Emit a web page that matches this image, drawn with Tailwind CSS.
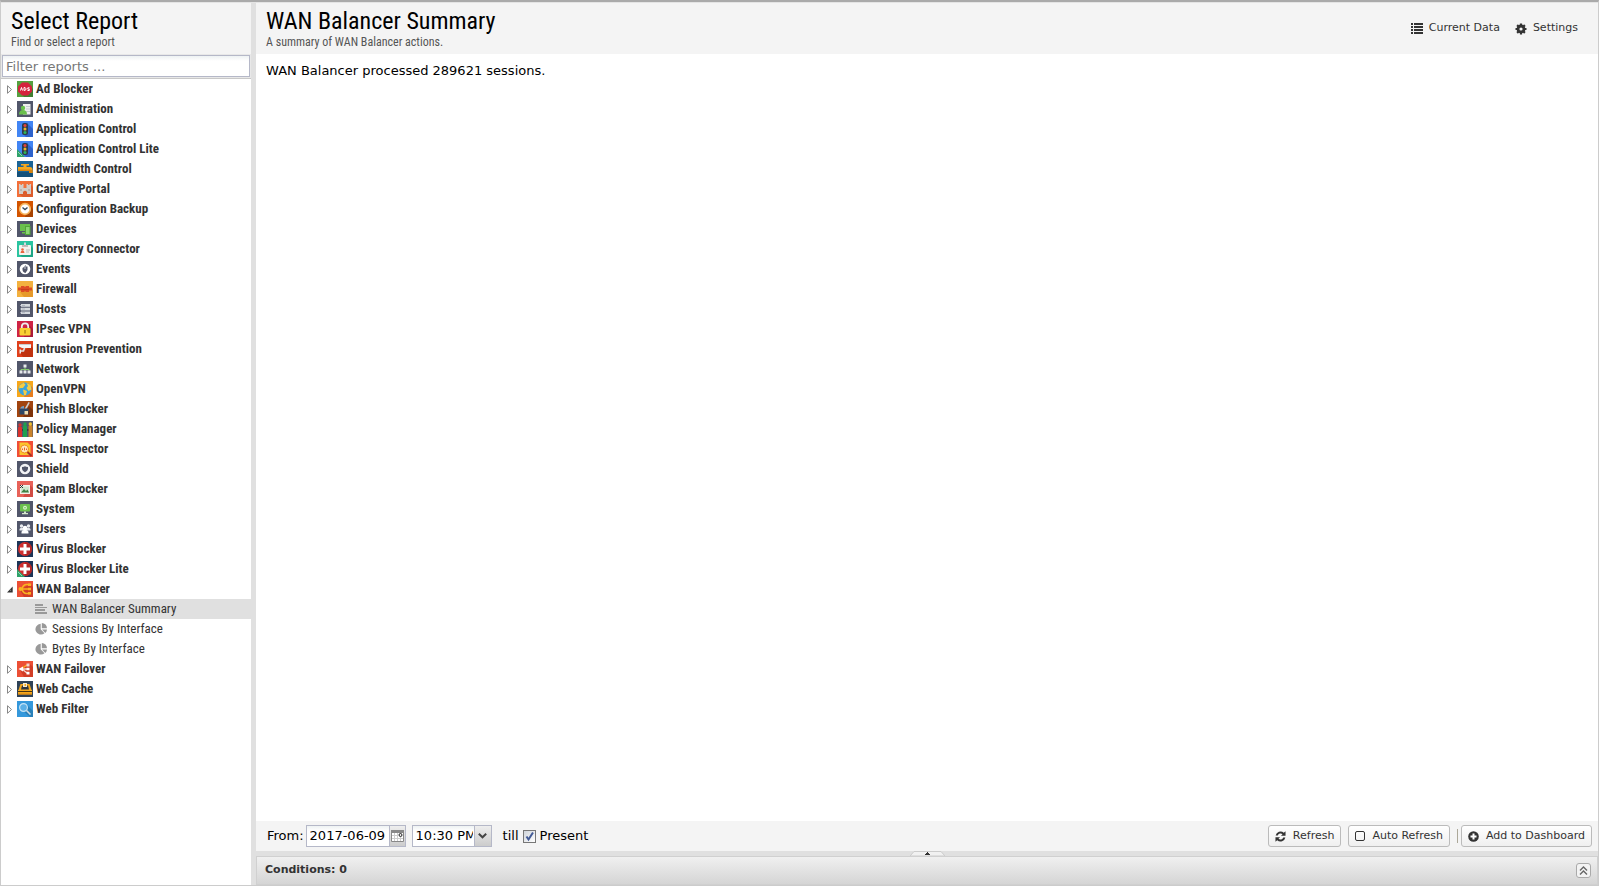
<!DOCTYPE html>
<html lang="en">
<head>
    <meta charset="UTF-8">
    <meta name="viewport" content="width=device-width, initial-scale=1.0">
    <title>Reports - WAN Balancer Summary</title>
    <script src="https://cdn.jsdelivr.net/npm/@tailwindcss/browser@4"></script>
</head>
<body class="h-screen flex flex-col overflow-hidden bg-white text-black font-['DejaVu_Sans',sans-serif] text-[13px] border border-t-2 border-[#cccccc] border-t-[#aaaaaa]">
    <div class="flex-1 min-h-0 flex border-t border-[#e4e4e4]">
        <!-- Report list -->
        <aside class="w-[250px] shrink-0 flex flex-col font-['Roboto_Condensed','Liberation_Sans_Narrow',sans-serif]">
            <header class="h-[51px] px-[10px] pt-1 bg-[#f4f4f4]">
                <h2 class="text-[24px] leading-[28px]">Select Report</h2>
                <p class="text-[12px] leading-[14px] text-[#555555]">Find or select a report</p>
            </header>
            <div class="h-[25px] p-px bg-[#e8e8e8] border-b border-[#c8c8c8]">
                <input id="filter" type="text" aria-label="Filter reports" placeholder="Filter reports ..." oninput="filterReports()" class="block w-full h-[22px] px-[3px] border border-[#b5b8c8] bg-linear-to-b from-[#eef2f3] to-white to-25% font-['DejaVu_Sans',sans-serif] text-[13px] placeholder:text-[#777777] outline-none">
            </div>
            <ul id="tree" class="flex-1 overflow-hidden text-[13px] text-[#333333]"></ul>
        </aside>

        <div class="w-[5px] shrink-0 bg-[#e0e0e0]"></div>

        <!-- Report view -->
        <main class="flex-1 min-w-0 flex flex-col">
            <header class="h-[51px] pl-[10px] pr-5 flex justify-between bg-[#f4f4f4]">
                <div class="pt-1 font-['Roboto_Condensed','Liberation_Sans_Narrow',sans-serif]">
                    <h1 class="text-[24px] leading-[28px]">WAN Balancer Summary</h1>
                    <p class="text-[12px] leading-[14px] text-[#555555]">A summary of WAN Balancer actions.</p>
                </div>
                <div class="flex items-center gap-[15px] text-[11px] text-[#333333]">
                    <button class="flex items-center gap-[6px]">
                        <svg class="w-3 h-3" viewBox="0 0 12 12" fill="#333"><path d="M0 0h2v2H0zM3 0h9v2H3zM0 3h2v2H0zM3 3h9v2H3zM0 6h2v2H0zM3 6h9v2H3zM0 9h2v2H0zM3 9h9v2H3z"/></svg>
                        Current Data
                    </button>
                    <button class="flex items-center gap-[6px]">
                        <svg class="w-3 h-3" viewBox="0 0 12 12" fill="none" stroke="#333"><circle cx="6" cy="6" r="3" stroke-width="2.800"/><path d="M6 .5v2M6 9.500v2M.5 6h2M9.500 6h2M2.100 2.100l1.400 1.400M8.500 8.500l1.400 1.400M2.100 9.900l1.400-1.400M8.500 3.500l1.400-1.400" stroke-width="2.200"/></svg>
                        Settings
                    </button>
                </div>
            </header>

            <section class="flex-1 px-[10px] pt-[7px]">WAN Balancer processed 289621 sessions.</section>

            <div class="h-[30px] pl-[11px] pr-[6px] flex items-center bg-[#f4f4f4]">
                <label for="fromDate">From:</label>
                <div class="ml-[2px] flex h-[22px] border border-[#b5b8c8]">
                    <input id="fromDate" type="text" value="2017-06-09" class="w-[82px] px-[3px] bg-linear-to-b from-[#eef2f3] to-white to-25% outline-none">
                    <button aria-label="Pick a date" class="w-4 grid place-items-center border-l border-[#b5b8c8] bg-linear-to-b from-[#eeeeee] to-[#cccccc]">
                        <svg class="w-[13px] h-[13px]" viewBox="0 0 13 13"><path d="M.5 1.500h12v10H.5z" fill="#fff" stroke="#888"/><path d="M0 0h13v3H0z" fill="#888"/><path d="M3.500 3v8M6.500 3v8M9.500 7v4M1 5.500h6M1 8.500h11" stroke="#ccc"/><circle cx="9.500" cy="5" r="1.500" fill="#eee" stroke="#222"/></svg>
                    </button>
                </div>
                <div class="relative ml-[6px] h-[22px]">
                    <select id="fromTime" aria-label="From time" class="appearance-none w-20 h-[22px] pl-[3px] pr-[18px] border border-[#b5b8c8] bg-linear-to-b from-[#eef2f3] to-white to-25% outline-none">
                        <option>10:30 PM</option>
                        <option>11:00 PM</option>
                    </select>
                    <span class="absolute right-px top-px w-[17px] h-5 grid place-items-center border-l border-[#b5b8c8] bg-linear-to-b from-[#eeeeee] to-[#cccccc] pointer-events-none">
                        <svg class="w-[9px] h-[6px]" viewBox="0 0 9 6" fill="none"><path d="M.8 .8L4.500 4.300 8.200 .8" stroke="#444" stroke-width="2"/></svg>
                    </span>
                </div>
                <span class="ml-[11px]">till</span>
                <div class="relative ml-1 w-[13px] h-[13px]">
                    <input id="present" type="checkbox" checked class="peer appearance-none block w-[13px] h-[13px] border border-[#777777] bg-linear-to-br from-[#cfd4da] to-white">
                    <svg class="hidden peer-checked:block absolute inset-0 w-[13px] h-[13px] pointer-events-none" viewBox="0 0 13 13" fill="none"><path d="M3.500 6.500l2 3L10 2.500" stroke="#425a96" stroke-width="2"/></svg>
                </div>
                <label for="present" class="ml-1">Present</label>

                <div class="ml-auto flex items-center text-[11px] text-[#333333]">
                    <button class="h-[22px] px-[6px] flex items-center gap-[7px] border border-[#bbbbbb] rounded-[3px] bg-linear-to-b from-white to-[#efefef]">
                        <svg class="w-[11px] h-[11px]" viewBox="0 0 12 12" fill="#333"><path d="M.7 5A5.400 5.400 0 0 1 9.600 2L11.500 .2V5.200H6.500L8.200 3.500A3.200 3.200 0 0 0 3 5zM11.300 7a5.400 5.400 0 0 1-8.900 3L.5 11.800V6.800h5L3.800 8.500A3.200 3.200 0 0 0 9 7z"/></svg>
                        Refresh
                    </button>
                    <button class="ml-[7px] h-[22px] px-[6px] flex items-center gap-[6px] border border-[#bbbbbb] rounded-[3px] bg-linear-to-b from-white to-[#efefef]">
                        <svg class="w-[11px] h-[11px]" viewBox="0 0 11 11" fill="none"><rect x=".5" y=".5" width="9" height="9" rx="1.500" stroke="#333"/></svg>
                        Auto Refresh
                    </button>
                    <span class="ml-[7px] mr-[3px] w-px h-[14px] bg-[#aca899]"></span>
                    <button class="h-[22px] px-[6px] flex items-center gap-[7px] border border-[#bbbbbb] rounded-[3px] bg-linear-to-b from-white to-[#efefef]">
                        <svg class="w-[11px] h-[11px]" viewBox="0 0 11 11"><circle cx="5.500" cy="5.500" r="5.300" fill="#333"/><path d="M5.500 2.500v6M2.500 5.500h6" stroke="#fff" stroke-width="2"/></svg>
                        Add to Dashboard
                    </button>
                </div>
            </div>

            <div class="h-[5px] flex justify-center bg-[#e0e0e0]">
                <svg class="w-[35px] h-[5px]" viewBox="0 0 35 5"><path d="M0 5L4 .5h27L35 5z" fill="#f1f1f1" stroke="#ccc"/><path d="M17 1h1v1h1v1h1v1h-5V3h1V2h1z" fill="#333"/></svg>
            </div>
            <div class="h-[29px] pl-2 pr-[6px] flex items-center justify-between border border-[#d0d0d0] bg-linear-to-b from-[#f0f0f0] to-[#d5d5d5] text-[11px] font-bold text-[#333333]">
                Conditions: 0
                <button aria-label="Expand conditions" class="w-[15px] h-[15px] grid place-items-center border border-[#aaaaaa] rounded-[3px] bg-[#f3f3f3]">
                    <svg class="w-[9px] h-[9px]" viewBox="0 0 9 9" fill="none" stroke="#666" stroke-width="1.400"><path d="M1 4.500L4.500 1 8 4.500M1 8.500L4.500 5 8 8.500"/></svg>
                </button>
            </div>
        </main>
    </div>

    <script>
        const slate = '<path d="M0 0h16v16H0z" fill="#51566a"/>';
        const lite = '<path d="M0 8l8 8H0z" fill="#2fa36b"/><path d="M1 11l4 4" stroke="#8fd4b2"/>';
        const traffic = '<path d="M0 0h16v16H0z" fill="#4285f4"/><path d="M10 2l6 6v8H9L6 13z" fill="#2d62cc"/><rect x="5" y="2" width="6" height="12" rx="2" fill="#2d3b4e"/><circle cx="8" cy="4.500" r="1.500" fill="#e8413a"/><circle cx="8" cy="8" r="1.500" fill="#f0b429"/><circle cx="8" cy="11.500" r="1.500" fill="#2fb45a"/>';
        const virus = '<path d="M0 0h16v16H0z" fill="#1d3557"/><circle cx="8" cy="8" r="7" fill="#d13030"/><path d="M8 1a7 7 0 0 1 0 14z" fill="#b32626"/><path d="M8 3v10M3 8h10" stroke="#fff" stroke-width="3"/>';
        const wan = '<path d="M0 0h16v16H0z" fill="#ec4f35"/><path d="M13 3l3 3v10H7l-4-7z" fill="#d13d26"/>';

        const summaryIcon = '<path d="M0 1h8v2H0zM0 4h12v1H0zM0 6h10v2H0zM0 9h12v2H0z" fill="#999"/>';
        const pieIcon = '<path d="M5.700 .8v5.400l3.800 4A5.400 5.400 0 1 1 5.700 .8z" fill="#999"/><path d="M6.800 0A5.200 5.200 0 0 1 12 5.200H6.800z" fill="#999"/><path d="M7 6.400h5a5.500 5.500 0 0 1-1.700 3.500z" fill="#999"/>';

        const categories = [
            { name: 'Ad Blocker', icon: '<path d="M0 0h16v16H0z" fill="#55a040"/><path d="M12 4l4 4v8H7l-2-3z" fill="#3f7f30"/><path d="M5 1.500h6l4 4v5l-4 4H5l-4-4v-5z" fill="#d5223c"/><path d="M3.500 9.500l1-3 1 3M7 6.500v3q2.500-.2 2-1.800-.3-1.200-2-1.200M12.500 6.800h-1.700v1.300h1.500v1.400h-1.800" stroke="#fff" fill="none"/>' },
            { name: 'Administration', icon: slate + '<path d="M6 3h7.500v10.500H6z" fill="#eee"/><path d="M9 5.500h4M9 8h4M9 10.500h4" stroke="#c5cad0"/><circle cx="6" cy="7" r="2.200" fill="#6ac04c"/><path d="M2 13.500q0-4.500 4-4.500t4 4.500z" fill="#6ac04c"/>' },
            { name: 'Application Control', icon: traffic },
            { name: 'Application Control Lite', icon: traffic + lite },
            { name: 'Bandwidth Control', icon: '<path d="M0 0h16v16H0z" fill="#1b6496"/><path d="M0 11h12l4 2v3H0z" fill="#14507a"/><path d="M4 3h8v1.500H9.500V6H13q2.500 0 2.500 2.500V12H12v-2H1V6h5.500V4.500H4z" fill="#f6a81c"/><path d="M1 8.500h12l2.500 .5v3H12v-2H1z" fill="#d98410"/>' },
            { name: 'Captive Portal', icon: '<path d="M0 0h16v16H0z" fill="#f3703a"/><path d="M14 4l2 2v10H6l-4-3z" fill="#dc5c2c"/><path d="M2 3h1.500v1H5V3h1.500v4h3V3H11v1h1.500V3H14v10h-4v-2q-2-2.500-4 0v2H2z" fill="#d3cdc8"/><path d="M4 8v2M12 8v2" stroke="#a39c96"/>' },
            { name: 'Configuration Backup', icon: '<path d="M0 0h16v16H0z" fill="#d35400"/><path d="M12 4l4 4v8H8z" fill="#a84300"/><circle cx="8" cy="8" r="5.300" fill="#fff" stroke="#f6b45c" stroke-width="1.700"/><path d="M5.500 6.500L8 8.500l2.500-2" stroke="#34495e" stroke-width="1.400" fill="none"/>' },
            { name: 'Devices', icon: slate + '<path d="M3 3h10v7H3z" fill="#6ac04c"/><path d="M5 11h4v1.500H5z" fill="#6ac04c"/><rect x="8.500" y="5.500" width="4.500" height="8" fill="#8cd573" stroke="#51a637"/>' },
            { name: 'Directory Connector', icon: '<path d="M0 0h16v16H0z" fill="#2bc4a0"/><path d="M14 5l2 2v9H5l-2-2z" fill="#1da686"/><rect x="2" y="4" width="12" height="10" rx="1" fill="#f3f3ee"/><path d="M7 1.500h2V5H7z" fill="#d5d9dc"/><path d="M5 5h6" stroke="#988"/><circle cx="5.500" cy="8.500" r="1.300" fill="#e96640"/><path d="M3.500 12q0-2.500 2-2.500t2 2.500z" fill="#e96640"/><path d="M9 9h4M9 11h3" stroke="#bbb"/>' },
            { name: 'Events', icon: slate + '<circle cx="8" cy="8" r="5.300" fill="#fff"/><path d="M8.500 4l.5 1.500h1.500v3.500l-2 3Q5.500 11 5.500 8.500V7L7 6z" fill="#51566a"/><path d="M8 5v3" stroke="#cfd2da"/>' },
            { name: 'Firewall', icon: '<path d="M0 0h16v16H0z" fill="#f3b13f"/><path d="M14 7l2 2v7H7l-4-5z" fill="#e69a2b"/><path d="M4 5h3.500v1h1V5H12v1.500h3v3h-3V11H8.500v-1h-1v1H4V9.500H1v-3h3z" fill="#dd4c25"/><path d="M4 8.500h8" stroke="#c43d1b"/>' },
            { name: 'Hosts', icon: slate + '<path d="M4 3h9v2.700H4zM4 6.700h9v2.700H4zM4 10.400h9v2.700H4z" fill="#d5d9de"/><path d="M3 4.500h1M3 8h1M3 11.700h1" stroke="#aab"/><path d="M5 4.500h3M5 8h3M5 11.700h3" stroke="#b0b5c0"/>' },
            { name: 'IPsec VPN', icon: '<path d="M0 0h16v16H0z" fill="#cf2445"/><path d="M11 3l5 5v8H7z" fill="#ac1a37"/><path d="M4.800 8V5.500a3.200 3.200 0 0 1 6.400 0V8" fill="none" stroke="#eee" stroke-width="1.800"/><rect x="2.500" y="7" width="11" height="7.500" rx="1" fill="#f9d032"/><path d="M8 9v3.500" stroke="#b58a15" stroke-width="1.500"/>' },
            { name: 'Intrusion Prevention', icon: '<path d="M0 0h16v16H0z" fill="#e0401c"/><path d="M14 5l2 2v9H6l-3-4z" fill="#c0320f"/><path d="M2 3.500h12V7H5L2 5.500z" fill="#f4f4f4"/><path d="M2 3h12v1H2z" fill="#ccc"/><path d="M7.500 7l-1 3H3" stroke="#ddd" stroke-width="1.600" fill="none"/><path d="M2.500 8.500H4v4H2.500z" fill="#eee"/>' },
            { name: 'Network', icon: slate + '<path d="M8 5v5M4 10V8.500h8V10" stroke="#84c76d" fill="none"/><path d="M6.500 3.500h3v3h-3zM2.500 9.500h3v3h-3zM6.500 9.500h3v3h-3zM10.500 9.500h3v3h-3z" fill="#e6e8ec"/>' },
            { name: 'OpenVPN', icon: '<path d="M0 0h16v16H0z" fill="#f7a71b"/><path d="M13 4l3 3v9H7z" fill="#e87e1e"/><circle cx="8" cy="8" r="6.500" fill="#3ba3dc"/><path d="M2.500 4.500l4-2.800 2 1.800L6 7H4L2 7.500zM9.500 2l4 2 1 4.500-3 1.500-2-3 1.500-2zM6 8.500l4 1.500-1 4L7 14z" fill="#f5cd45"/>' },
            { name: 'Phish Blocker', icon: '<path d="M0 0h16v16H0z" fill="#a1440f"/><path d="M12 5l4 4v7H6z" fill="#7e330a"/><path d="M7.500 8L11.500 1l1.300 .8L9.500 8z" fill="#ccc"/><rect x="2.500" y="7.500" width="9" height="6" fill="#2d4766"/><path d="M3 7.500q1-3 4-2.500v2.500z" fill="#6fa0c8"/><path d="M7.500 10h3.500v3.500H7.500z" fill="#f0ddb0"/>' },
            { name: 'Policy Manager', icon: slate + '<path d="M1 6.500q2-2 4 0V16H1z" fill="#d9332e"/><circle cx="3" cy="4" r="1.700" fill="#d9332e"/><path d="M6 5q2-2 4 0v11H6z" fill="#1fa04f"/><circle cx="8" cy="3" r="1.700" fill="#1fa04f"/><path d="M11.500 5q2-2 4 0v11h-4z" fill="#c9832c"/><circle cx="13.300" cy="3" r="1.700" fill="#f2c02c"/><path d="M5 9h1M10 9h1.500" stroke="#222"/>' },
            { name: 'SSL Inspector', icon: '<path d="M0 0h16v16H0z" fill="#f04e37"/><path d="M2.500 1.500h8l3 3V14h-11z" fill="#fbc62d"/><circle cx="7.500" cy="8" r="4" fill="#ffe9bc" stroke="#f28a1c"/><path d="M5.500 9V7.500M7.500 9.500V6.500M9.500 9V7.500" stroke="#e8622b"/><path d="M10.500 11l4 4" stroke="#a6321f" stroke-width="2"/>' },
            { name: 'Shield', icon: slate + '<circle cx="8" cy="8" r="5.300" fill="#f2f3f5"/><path d="M5 6q3 0 3-1 0 1 3 1 .5 3.700-3 5.200Q4.500 9.700 5 6z" fill="#51566a"/>' },
            { name: 'Spam Blocker', icon: '<path d="M0 0h16v16H0z" fill="#e86259"/><path d="M13 4l3 3v9H6z" fill="#d14b43"/><path d="M3 4h10v9H3z" fill="#f2f2ea"/><path d="M4 5.500h8v6H4z" fill="#cfe8cf"/><path d="M4 11.500L7 8l2 2 1.500-1.500L12 11.500z" fill="#3f8144"/><path d="M3 4l3 3M6 4L3 7" stroke="#333"/>' },
            { name: 'System', icon: slate + '<rect x="3" y="3" width="10" height="7.500" rx="1" fill="#6ac04c"/><circle cx="8" cy="6.700" r="2" fill="#d6f2cb"/><circle cx="8" cy="6.700" r=".8" fill="#6ac04c"/><path d="M7 10.500h2V12h2v1.200H5V12h2z" fill="#d5e8cd"/>' },
            { name: 'Users', icon: slate + '<circle cx="4.500" cy="5" r="1.700" fill="#e8eaee"/><circle cx="11.500" cy="5" r="1.700" fill="#e8eaee"/><path d="M2.500 9.500V8q1.500-2 3-1h5q1.500-1 3 1v1.500z" fill="#e8eaee"/><circle cx="8" cy="7" r="2.300" fill="#fff"/><path d="M4.500 12.500q-.5-4 3.500-3.500 4-.5 3.500 3.500z" fill="#fff"/>' },
            { name: 'Virus Blocker', icon: virus },
            { name: 'Virus Blocker Lite', icon: virus + lite },
            { name: 'WAN Balancer', open: true, icon: wan + '<path d="M3 8h10M5 8q1-4 4-4.500h4M5 8q1 4 4 4.500h4" stroke="#f9b321" stroke-width="1.600" fill="none"/><circle cx="3.500" cy="8" r="2" fill="#f9b321"/><path d="M11 2.500h3v2.500h-3zM11 6.800h3v2.500h-3zM11 11h3v2.500h-3z" fill="#f9b321"/>', reports: [
                { name: 'WAN Balancer Summary', icon: summaryIcon, selected: true },
                { name: 'Sessions By Interface', icon: pieIcon },
                { name: 'Bytes By Interface', icon: pieIcon }
            ] },
            { name: 'WAN Failover', icon: wan + '<path d="M4 8l6-4" stroke="#f9b321" stroke-width="1.500"/><path d="M5 8h6M5 8l5 4" stroke="#f5d6cf" stroke-width="1.300"/><path d="M1.500 8L6 5.500v5z" fill="#fff"/><path d="M9.500 2.500h3v3h-3z" fill="#f5d6cf"/><path d="M9.500 6.800h3v2.500h-3zM9.500 10.800h3v2.700h-3z" fill="#fff"/>' },
            { name: 'Web Cache', icon: '<path d="M0 0h16v16H0z" fill="#2f4257"/><path d="M3.500 3h9L14.500 9v.5h-13V9z" fill="#f6a81c"/><path d="M5 4.500h6l1 4H4z" fill="#2c3440"/><path d="M6 2h4v4H6z" fill="#f4e9cf"/><path d="M7.500 3h1.500v2H7.500z" fill="#f6a81c"/><path d="M1 9h14v4.500H1z" fill="#f6a81c"/><path d="M1 10.500h14" stroke="#4a3510"/><path d="M1 12.500h14v1H1z" fill="#d98410"/>' },
            { name: 'Web Filter', icon: '<path d="M0 0h16v16H0z" fill="#3598db"/><path d="M10 4l6 6v6h-3L5 9z" fill="#2980b9"/><circle cx="6.500" cy="6.500" r="3.900" fill="#5cb0e6" stroke="#c3e2f5" stroke-width="1.200"/><path d="M9.500 9.500l4 4" stroke="#d5dde2" stroke-width="1.600"/>' }
        ];

        const closedArrow = '<path d="M.5 .7v7.600L4.500 4.500z" fill="#fff" stroke="#888"/>';
        const openArrow = '<path d="M5.700 1.500v6H0z" fill="#333"/><path d="M4 4v2H2.500z" fill="#777"/>';

        function drawTree(list) {
            const tree = document.getElementById('tree');
            tree.innerHTML = '';
            list.forEach(cat => {
                tree.innerHTML +=
                    `<li><button class="w-full h-5 pl-[6px] flex items-center font-bold text-left">
                        <svg class="w-[6px] h-[9px] mr-1" viewBox="0 0 6 9">${cat.open ? openArrow : closedArrow}</svg>
                        <svg class="w-4 h-4 mr-[3px]" viewBox="0 0 16 16">${cat.icon}</svg>${cat.name}
                    </button></li>`;
                (cat.open ? cat.reports : []).forEach(report => {
                    tree.innerHTML +=
                        `<li><button class="w-full h-5 pl-[34px] flex items-center text-left ${report.selected ? 'bg-[#e0e0e0]' : ''}">
                            <svg class="w-3 h-3 mr-[5px]" viewBox="0 0 12 12">${report.icon}</svg>${report.name}
                        </button></li>`;
                });
            });
        }

        function filterReports() {
            const query = document.getElementById('filter').value.toLowerCase();
            drawTree(categories.filter(cat => cat.name.toLowerCase().includes(query)));
        }

        drawTree(categories);
    </script>
</body>
</html>
